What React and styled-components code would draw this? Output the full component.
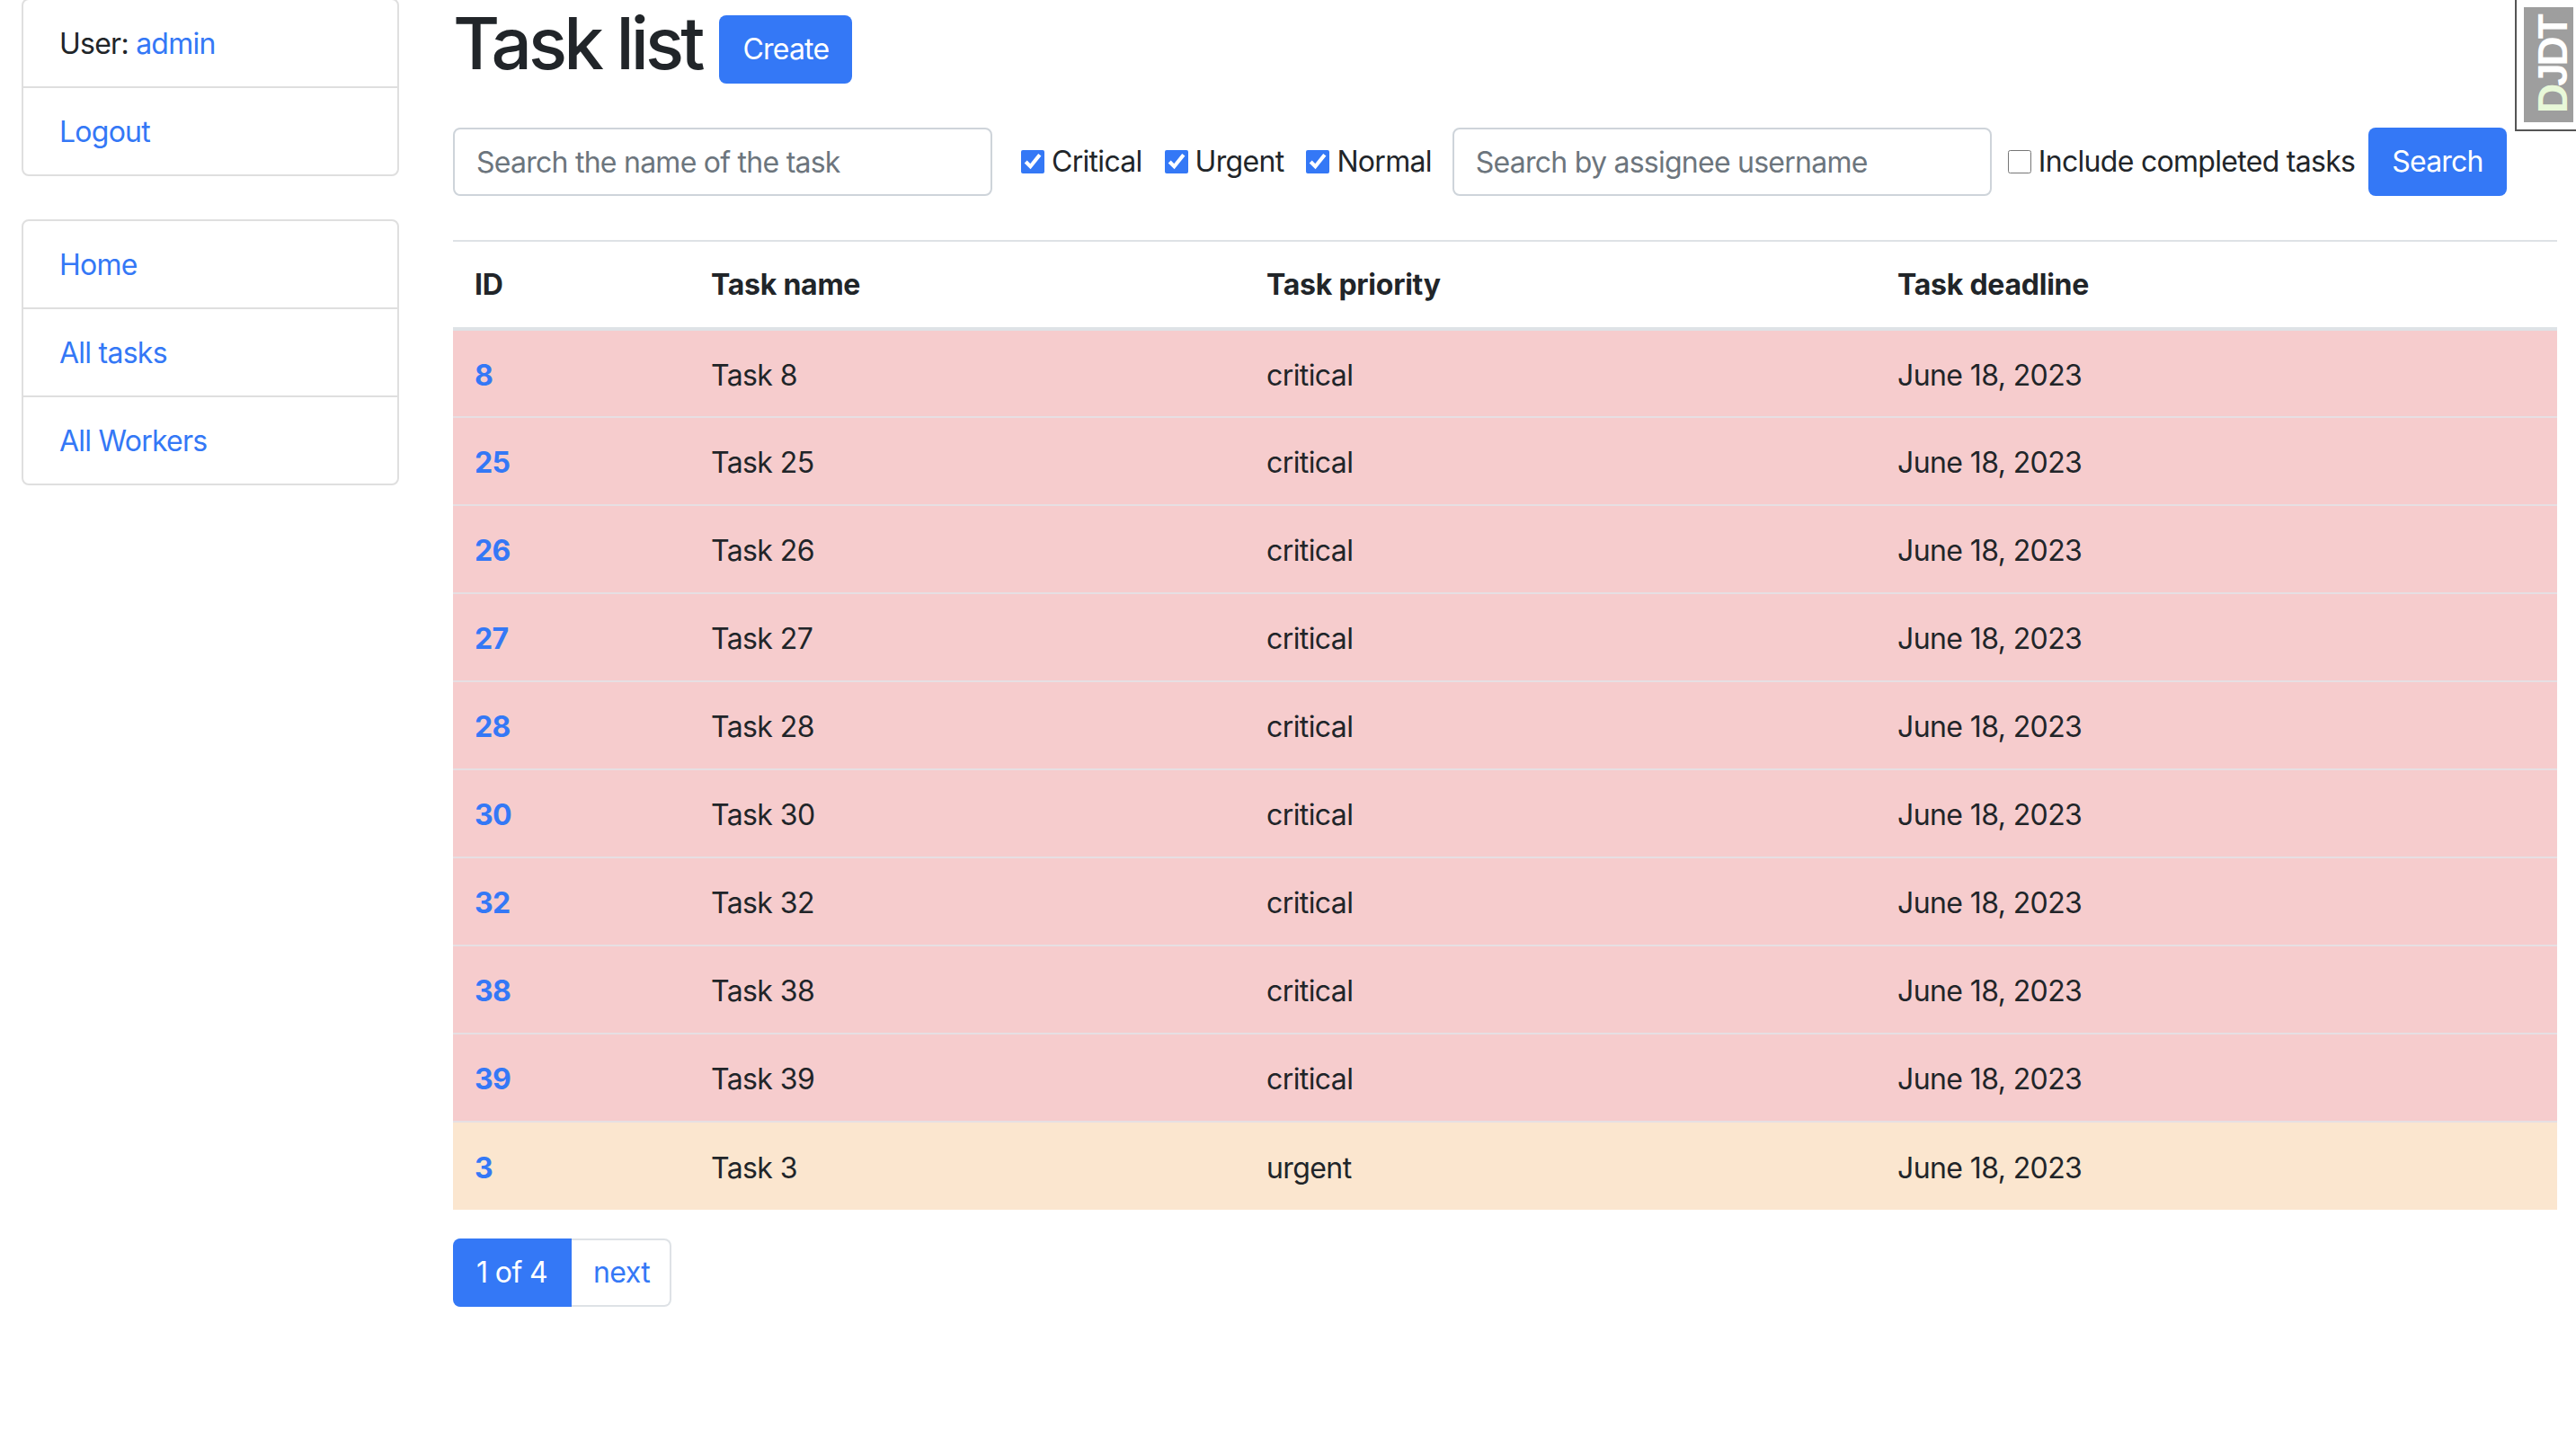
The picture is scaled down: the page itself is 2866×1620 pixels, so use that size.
import React from 'react';
import styled, { createGlobalStyle } from 'styled-components';

const GlobalStyle = createGlobalStyle`
  body {
    margin: 0;
    background: #fff;
    color: #212529;
    font-family: Inter, "Liberation Sans", sans-serif;
    font-size: 32px;
    line-height: 48px;
    letter-spacing: -0.6px;
    overflow: hidden;
  }
  a {
    color: #3478f6;
    text-decoration: none;
  }
`;

const Page = styled.div`
  display: grid;
  grid-template-columns: 420px 2341px;
  column-gap: 60px;
  padding: 0 21px 0 24px;
  margin-top: -2px;
`;

const Sidebar = styled.aside`
  display: flex;
  flex-direction: column;
  gap: 48px;
`;

const ListGroup = styled.ul`
  list-style: none;
  margin: 0;
  padding: 0;
  border: 2px solid #dfdfdf;
  border-radius: 8px;
`;

const ListItem = styled.li`
  height: 96px;
  box-sizing: border-box;
  padding: 25px 40px 0;
  letter-spacing: -0.75px;
  & + & {
    border-top: 2px solid #dfdfdf;
    height: 98px;
  }
`;

const Main = styled.main`
  min-width: 0;
`;

const TitleRow = styled.div`
  display: flex;
  align-items: flex-start;
  gap: 20px;
  height: 144px;
`;

const Title = styled.h1`
  margin: 2px 0 0;
  font-size: 80px;
  line-height: 96px;
  font-weight: 550;
  letter-spacing: -3.9px;
`;

const Button = styled.button`
  height: 76px;
  box-sizing: border-box;
  border: 0;
  border-radius: 8px;
  background: #3478f6;
  color: #fff;
  font: inherit;
  letter-spacing: -0.8px;
  padding: 0 26px;
  margin-top: ${(p) => p.$top || 0}px;
  margin-left: ${(p) => p.$left || 0}px;
`;

const SearchForm = styled.form`
  display: flex;
  align-items: center;
  height: 76px;
`;

const TextInput = styled.input`
  width: 600px;
  height: 76px;
  box-sizing: border-box;
  border: 2px solid #ced4da;
  border-radius: 8px;
  padding: 0 24px;
  font: inherit;
  letter-spacing: -0.75px;
  color: #212529;
  flex: none;
  margin-left: ${(p) => p.$left || 0}px;
  &::placeholder {
    color: #6c757d;
    opacity: 1;
  }
`;

const CheckLabel = styled.label`
  display: flex;
  align-items: center;
  gap: 8px;
  margin-left: ${(p) => p.$left}px;
  white-space: nowrap;
  letter-spacing: -0.7px;
`;

const CheckBox = styled.input.attrs({ type: 'checkbox' })`
  width: 26px;
  height: 26px;
  margin: 0;
  accent-color: #3478f6;
  flex: none;
`;

const Rule = styled.hr`
  margin: 49px 0 0;
  border: 0;
  border-top: 2px solid #dee2e6;
`;

const Table = styled.table`
  width: 100%;
  border-collapse: collapse;
  table-layout: fixed;
`;

const HeadCell = styled.th`
  width: ${(p) => p.$width}px;
  height: 97px;
  box-sizing: border-box;
  padding: 0 24px;
  text-align: left;
  font-weight: 700;
  letter-spacing: -0.25px;
  border-bottom: 4px solid #dee2e6;
`;

const Row = styled.tr`
  background: ${(p) => (p.$priority === 'critical' ? '#f6cccd' : '#fbe6cf')};
  border-bottom: 2px solid #e6dfe3;
  &:last-child {
    border-bottom: 0;
  }
`;

const Cell = styled.td`
  height: 98px;
  box-sizing: border-box;
  padding: 4px 24px 0;
`;

const IdLink = styled.a`
  font-weight: 700;
`;

const Pagination = styled.nav`
  display: flex;
  margin-top: 32px;
  height: 76px;
`;

const CurrentPage = styled.span`
  display: flex;
  align-items: center;
  width: 132px;
  box-sizing: border-box;
  padding-left: 26px;
  background: #3478f6;
  color: #fff;
  border-radius: 8px 0 0 8px;
`;

const NextLink = styled.a`
  display: flex;
  align-items: center;
  width: 111px;
  box-sizing: border-box;
  padding-left: 24px;
  border: 2px solid #dee2e6;
  border-left: 0;
  border-radius: 0 8px 8px 0;
`;

const DebugHandle = styled.div`
  position: fixed;
  top: -2px;
  right: 0;
  width: 68px;
  height: 148px;
  box-sizing: border-box;
  background: #fff;
  border: 2px solid #555;
  border-right: 0;
  padding: 8px 0 8px 8px;
`;

const DebugLogo = styled.div`
  display: flex;
  align-items: center;
  justify-content: center;
  height: 128px;
  box-sizing: border-box;
  padding-right: 9px;
  background: #9e9e9e;
  color: #fff;
  font-family: "Liberation Sans", sans-serif;
  font-weight: 700;
  font-size: 46px;
  line-height: 1;
  letter-spacing: -3px;
  writing-mode: vertical-rl;
  transform: rotate(180deg);
  span {
    color: #e8f8d8;
  }
`;

const tasks = [
  [8, 'critical'],
  [25, 'critical'],
  [26, 'critical'],
  [27, 'critical'],
  [28, 'critical'],
  [30, 'critical'],
  [32, 'critical'],
  [38, 'critical'],
  [39, 'critical'],
  [3, 'urgent'],
];

const App = () => {
  return (
    <>
      <GlobalStyle />
      <Page>
        <Sidebar>
          <ListGroup>
            <ListItem>User: <a href="#admin">admin</a></ListItem>
            <ListItem><a href="#logout">Logout</a></ListItem>
          </ListGroup>
          <ListGroup>
            <ListItem><a href="#home">Home</a></ListItem>
            <ListItem><a href="#tasks">All tasks</a></ListItem>
            <ListItem><a href="#workers">All Workers</a></ListItem>
          </ListGroup>
        </Sidebar>
        <Main>
          <TitleRow>
            <Title>Task list</Title>
            <Button type="button" $top={19}>Create</Button>
          </TitleRow>
          <SearchForm>
            <TextInput placeholder="Search the name of the task" />
            <CheckLabel $left={32}><CheckBox defaultChecked />Critical</CheckLabel>
            <CheckLabel $left={25}><CheckBox defaultChecked />Urgent</CheckLabel>
            <CheckLabel $left={25}><CheckBox defaultChecked />Normal</CheckLabel>
            <TextInput $left={23} placeholder="Search by assignee username" />
            <CheckLabel $left={18}><CheckBox />Include completed tasks</CheckLabel>
            <Button type="button" $left={15}>Search</Button>
          </SearchForm>
          <Rule />
          <Table>
            <thead>
              <tr>
                <HeadCell $width={263}>ID</HeadCell>
                <HeadCell $width={618}>Task name</HeadCell>
                <HeadCell $width={702}>Task priority</HeadCell>
                <HeadCell $width={758}>Task deadline</HeadCell>
              </tr>
            </thead>
            <tbody>
              {tasks.map(([id, priority]) => (
                <Row key={id} $priority={priority}>
                  <Cell><IdLink href={`#${id}`}>{id}</IdLink></Cell>
                  <Cell>Task {id}</Cell>
                  <Cell>{priority}</Cell>
                  <Cell>June 18, 2023</Cell>
                </Row>
              ))}
            </tbody>
          </Table>
          <Pagination>
            <CurrentPage>1 of 4</CurrentPage>
            <NextLink href="#next">next</NextLink>
          </Pagination>
        </Main>
      </Page>
      <DebugHandle>
        <DebugLogo><span>D</span>JDT</DebugLogo>
      </DebugHandle>
    </>
  );
};

export default App;
